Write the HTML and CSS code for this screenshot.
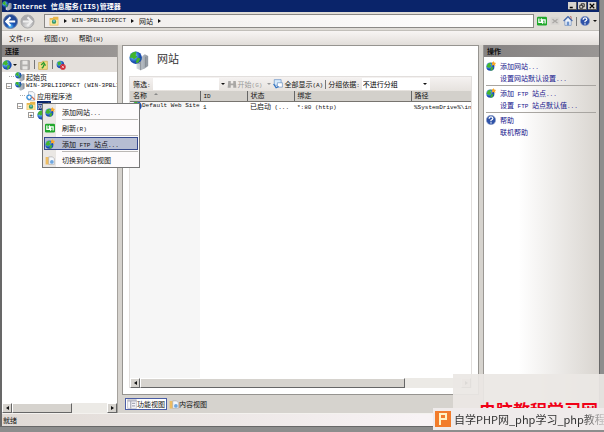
FILE: index.html
```
<!DOCTYPE html>
<html lang="zh-CN">
<head>
<meta charset="utf-8">
<title>Internet 信息服务(IIS)管理器</title>
<link rel="stylesheet" href="styles.css">
</head>
<body>
<svg class="defs" aria-hidden="true">
  <defs>
    <radialGradient id="sea" cx="35%" cy="35%"><stop offset="0" stop-color="#c4ecff"/><stop offset=".5" stop-color="#4a9be6"/><stop offset="1" stop-color="#1a4cae"/></radialGradient>
    <linearGradient id="steel"><stop offset="0" stop-color="#d8dde2"/><stop offset="1" stop-color="#8d959e"/></linearGradient>
    <radialGradient id="blueball" cx="50%" cy="85%"><stop offset="0" stop-color="#58c8ff"/><stop offset=".5" stop-color="#1b55b8"/><stop offset="1" stop-color="#234a96"/></radialGradient>
    <radialGradient id="grayball" cx="50%" cy="80%"><stop offset="0" stop-color="#e4e4e4"/><stop offset="1" stop-color="#a9a9ac"/></radialGradient>
    <symbol id="globe" viewBox="0 0 16 16"><circle cx="8" cy="8" r="7.5" fill="url(#sea)"/><path d="M2 4Q5 0 9 1L8 4 10 6 6 9 4 7 1 8zM9 8l4 1-2 5-3 1z" fill="#44b52d"/></symbol>
    <symbol id="site" viewBox="0 0 16 16"><circle cx="7" cy="9" r="6.5" fill="url(#sea)"/><path d="M2 6Q4 2 8 3L7 6 9 8 5 11 1 9zM8 10l4 0-2 5-3 0z" fill="#44b52d"/><path d="M12 0l1.200 2.500L16 3l-1.500 2 .5 3-3-1.500L9 7l1-3-1-2 2 0z" fill="#f9a928"/></symbol>
    <symbol id="server" viewBox="0 0 24 24"><path d="M9 8l5-2 5 2v13l-5 2-5-2zM16 6l3-2 4 2v12l-4 3-3-1z" fill="url(#steel)"/><path d="M14 8v15M10 11l3 1M10 14l3 1M20 7v12" stroke="#7d848c" fill="none"/><circle cx="8" cy="8" r="7.500" fill="url(#sea)"/><path d="M2 4Q5 0 9 1L8 5 10 7 6 10 4 8 1 8zM10 8l4 1-3 5-3 0z" fill="#41b52b"/></symbol>
    <symbol id="folder" viewBox="0 0 16 16"><path d="M1 3h5l1-2h8v14H1z" fill="#e9b64b"/><path d="M2 6h12v8H2z" fill="#ffe9a0"/><circle cx="8" cy="9" r="3.500" fill="#3c9b67"/><circle cx="8" cy="8" r="1.500" fill="#7bc4ee"/></symbol>
    <symbol id="refresh" viewBox="0 0 16 16"><rect y="1" width="16" height="14" rx="2" fill="#21a82c"/><path d="M3 4v6h4V5M13 12V6H9v5" stroke="#fff" stroke-width="2" fill="none"/><path d="M5 6l2-3 2 3zM7 10l2 3 2-3z" fill="#fff"/></symbol>
    <symbol id="help" viewBox="0 0 16 16"><circle cx="8" cy="8" r="7.500" fill="#2e52a8" stroke="#9aa9cc"/><path d="M5 6q0-3 3-3t3 2.500Q11 7 8 8.500V10M8 11.500v2" stroke="#fff" stroke-width="2" fill="none"/></symbol>
    <symbol id="pages" viewBox="0 0 16 16"><path d="M1 3h5l1 2h4v10H1z" fill="#eebd62"/><path d="M6 3h6l3 3v9H6z" fill="#f5f8fc" stroke="#a8a8ad"/><circle cx="11" cy="11" r="3" fill="#6ea6df"/></symbol>
    <symbol id="home" viewBox="0 0 16 16"><path d="M3 7v8h10V7L8 2z" fill="#eef4fb" stroke="#5d7eb5"/><path d="M1 8l7-7 7 7" stroke="#4066ab" stroke-width="2" fill="none"/><path d="M6 9h4v6H6z" fill="#6d93cc"/><path d="M11 1h2v4" stroke="#a44" fill="none"/></symbol>
    <symbol id="pool" viewBox="0 0 16 16"><path d="M4 1h7l3 3v11H4z" fill="#f6f8fb" stroke="#9aa3b0"/><circle cx="5" cy="10" r="4.500" fill="#3f91d6"/><path d="M2 9l4-2 2 3-3 3z" fill="#fff"/><path d="M9 9l5 5" stroke="#d56a4a" stroke-width="2"/></symbol>
    <symbol id="disk" viewBox="0 0 16 16"><path d="M1 1h14v14H1z" fill="#b4b2b0" stroke="#8e8c8a"/><path d="M4 1h8v6H4zM4 10h8v5H4z" fill="#e8e6e4"/></symbol>
    <symbol id="up" viewBox="0 0 16 16"><path d="M1 4h5l1-2h8v13H1z" fill="#f1dc86" stroke="#c6a445"/><path d="M6 13q4-2 3-6M5 8l4-4 3 5" stroke="#2d9b30" stroke-width="2" fill="none"/></symbol>
    <symbol id="unlink" viewBox="0 0 16 16"><circle cx="7" cy="7" r="6" fill="url(#sea)"/><path d="M2 4l5-2 1 4-4 3z" fill="#44b52d"/><circle cx="11" cy="11" r="4.500" fill="#d22a35"/><path d="M9 9l4 4m0-4l-4 4" stroke="#fff"/></symbol>
    <symbol id="find" viewBox="0 0 16 16"><path d="M2 3h4v4h4V3h4l1 11h-5v-4H6v4H1z" fill="#a9a7a5"/></symbol>
    <symbol id="showall" viewBox="0 0 16 16"><path d="M2 1h11v9H2z" fill="#d7ebfc" stroke="#5d87bd"/><path d="M7 6h8v7H7z" fill="#fff" stroke="#5d87bd"/><path d="M1 8l4 6 4-2" stroke="#2d72c4" stroke-width="2" fill="none"/></symbol>
    <symbol id="features" viewBox="0 0 16 16"><path d="M1 1h14v14H1z" fill="#f7f7fa" stroke="#a9aab8"/><path d="M1 3h14M6 3v12M8 7h5M8 11h5" stroke="#a9aab8" stroke-width="2"/></symbol>
    <symbol id="stop" viewBox="0 0 16 16"><path d="M1 2h14v12H1z" fill="#d6d4d0"/><path d="M4 5l8 6m0-6l-8 6" stroke="#aaa8a5" stroke-width="2"/></symbol>
  </defs>
</svg>

<div class="window">
  <header class="title">
    <svg class="ico"><use href="#server"/></svg>
    <h1><span class="en">Internet </span>信息服务<span class="en">(IIS)</span>管理器</h1>
    <div class="caption">
      <button aria-label="最小化"><svg viewBox="0 0 8 8"><path d="M1 6h4" stroke="#000" stroke-width="2"/></svg></button>
      <button aria-label="还原"><svg viewBox="0 0 8 8"><path d="M3 3V1h4v4H5M1 3h4v4H1z" stroke="#000" fill="none"/></svg></button>
      <button aria-label="关闭"><svg viewBox="0 0 8 8"><path d="M1 1l6 6m0-6L1 7" stroke="#000" stroke-width="1.500"/></svg></button>
    </div>
  </header>

  <nav class="navbar">
    <button class="round" aria-label="后退"><svg viewBox="0 0 16 16"><circle cx="8" cy="8" r="7.500" fill="url(#blueball)" stroke="#7083aa"/><path d="M13 8H4M8 3.500L3.500 8 8 12.500" stroke="#fff" stroke-width="2.200" fill="none"/></svg></button>
    <button class="round" aria-label="前进"><svg viewBox="0 0 16 16"><circle cx="8" cy="8" r="7" fill="url(#grayball)" stroke="#aaa"/><path d="M3 8h9M8 3.500L12.500 8 8 12.500" stroke="#eee" stroke-width="2.200" fill="none"/></svg></button>
    <div class="address">
      <svg class="ico"><use href="#folder"/></svg><i class="tri"></i>
      <a href="#server-node" class="en">WIN-3PBLIIOPECT</a><i class="tri"></i>
      <a href="#sites">网站</a><i class="tri"></i>
    </div>
    <div class="navtools">
      <button aria-label="刷新"><svg class="ico"><use href="#refresh"/></svg></button>
      <button aria-label="停止"><svg class="ico"><use href="#stop"/></svg></button>
      <button aria-label="主页"><svg class="ico"><use href="#home"/></svg></button>
      <i class="bar"></i>
      <button aria-label="帮助"><svg class="ico"><use href="#help"/></svg></button>
      <i class="drop"></i>
    </div>
  </nav>

  <div class="menubar">
    <button>文件<span class="en">(F)</span></button>
    <button>视图<span class="en">(V)</span></button>
    <button>帮助<span class="en">(H)</span></button>
  </div>

  <div class="work">
    <aside class="connections">
      <h2>连接</h2>
      <div class="tools">
        <button aria-label="连接"><svg class="ico"><use href="#globe"/></svg></button><i class="drop"></i>
        <button aria-label="保存"><svg class="ico"><use href="#disk"/></svg></button><i class="bar"></i>
        <button aria-label="向上"><svg class="ico"><use href="#up"/></svg></button><i class="bar"></i>
        <button aria-label="断开"><svg class="ico"><use href="#unlink"/></svg></button>
      </div>
      <div class="treebox">
        <ul class="tree">
          <li class="l1"><i class="line"></i><svg class="ico"><use href="#server"/></svg>起始页</li>
          <li class="l1" id="server-node"><i class="box">−</i><svg class="ico"><use href="#server"/></svg><span class="en">WIN-3PBLIIOPECT (WIN-3PBLIIOPECT)</span></li>
          <li class="l2"><i class="line"></i><svg class="ico"><use href="#pool"/></svg>应用程序池</li>
          <li class="l2"><i class="box">−</i><svg class="ico"><use href="#folder"/></svg><span class="picked">网站</span></li>
          <li class="l3"><i class="box">+</i><svg class="ico"><use href="#globe"/></svg></li>
        </ul>
        <div class="context" role="menu">
          <button role="menuitem"><svg class="ico"><use href="#site"/></svg><span>添加网站<span class="en">...</span></span></button>
          <hr>
          <button role="menuitem"><svg class="ico"><use href="#refresh"/></svg><span>刷新<span class="en">(R)</span></span></button>
          <hr>
          <button role="menuitem" class="hot"><svg class="ico"><use href="#site"/></svg><span>添加<span class="en"> FTP </span>站点<span class="en">...</span></span></button>
          <hr>
          <button role="menuitem"><svg class="ico"><use href="#pages"/></svg><span>切换到内容视图</span></button>
        </div>
      </div>
      <div class="scroll"><button class="left" aria-label="向左"></button><div class="thumb"></div><div class="rest"></div><button class="right" aria-label="向右"></button></div>
    </aside>

    <main class="center">
      <section class="page">
        <div class="heading" id="sites"><svg><use href="#server"/></svg><h2>网站</h2></div>
        <div class="listing">
          <div class="filter">
            <label for="filter">筛选<span class="en">:</span></label>
            <input id="filter" type="text"><i class="drop"></i>
            <button class="off"><svg class="ico"><use href="#find"/></svg>开始<span class="en">(G)</span></button><i class="drop dim"></i>
            <button><svg class="ico"><use href="#showall"/></svg>全部显示<span class="en">(A)</span></button><i class="bar"></i>
            <label for="group">分组依据<span class="en">:</span></label>
            <div class="pick"><select id="group"><option>不进行分组</option></select><i class="drop"></i></div>
          </div>
          <table>
            <colgroup><col class="c1"><col class="c2"><col class="c3"><col class="c4"><col></colgroup>
            <thead><tr><th>名称<i class="sort"></i></th><th><span class="en">ID</span></th><th>状态</th><th>绑定</th><th>路径</th></tr></thead>
            <tbody>
              <tr><td><div class="name"><svg class="ico"><use href="#globe"/></svg><span class="en">Default Web Site</span></div></td><td><span class="en">1</span></td><td>已启动<span class="en"> (...</span></td><td><span class="en">*:80 (http)</span></td><td><span class="en">%SystemDrive%\in</span></td></tr>
            </tbody>
          </table>
          <div class="space"></div>
          <div class="scroll wide"><button class="left" aria-label="向左"></button><div class="thumb"></div><div class="rest"></div><button class="right" aria-label="向右"></button></div>
        </div>
      </section>
      <div class="tabs">
        <button class="on"><svg class="ico"><use href="#features"/></svg>功能视图</button>
        <button><svg class="ico"><use href="#pages"/></svg>内容视图</button>
      </div>
    </main>

    <aside class="actions">
      <h2>操作</h2>
      <ul>
        <li><svg class="ico"><use href="#site"/></svg><a href="#add">添加网站<span class="en">...</span></a></li>
        <li><a href="#defaults">设置网站默认设置<span class="en">...</span></a></li>
      </ul>
      <ul>
        <li><svg class="ico"><use href="#site"/></svg><a href="#ftp">添加<span class="en"> FTP </span>站点<span class="en">...</span></a></li>
        <li><a href="#ftpdefaults">设置<span class="en"> FTP </span>站点默认值<span class="en">...</span></a></li>
      </ul>
      <ul>
        <li><svg class="ico"><use href="#help"/></svg><a href="#help-topic">帮助</a></li>
        <li><a href="#online">联机帮助</a></li>
      </ul>
    </aside>
  </div>
  <footer class="status">就绪</footer>
</div>

<div class="mark">
  <div class="haze"><span>电脑教程学习网</span></div>
  <div class="brand">
    <svg viewBox="0 0 16 16"><path d="M0 0h16v16H0z" fill="#f27c2b"/><path d="M5 14V3h6v5H6" stroke="#fff3c4" stroke-width="2" fill="none"/></svg>
    <span>自学PHP网_php学习_php教程</span>
  </div>
</div>
</body>
</html>
```
FILE: styles.css
```
* { box-sizing: border-box; }
body {
  margin: 0;
  height: 100vh;
  padding: 0 4px 5px 0;
  position: relative;
  overflow: hidden;
  background: #8d8d8d;
  color: #111;
  font: 7px/10px "Noto Sans CJK SC", sans-serif;
}
.defs { position: absolute; width: 0; height: 0; }
.en { font-family: "Liberation Mono", monospace; font-size: 6px; line-height: 1; white-space: pre; }
h1, h2, ul { margin: 0; padding: 0; font-size: inherit; list-style: none; }
button {
  display: flex;
  align-items: baseline;
  padding: 0;
  border: 0;
  background: none;
  color: inherit;
  font: inherit;
  white-space: nowrap;
}
button .ico { align-self: center; margin-right: 1px; }
a { color: inherit; text-decoration: none; }
.ico { width: 10px; height: 10px; flex: none; display: block; }
.tri { border: 2px solid transparent; border-left: 3px solid #111; border-right: 0; }
.drop { flex: none; border: 2px solid transparent; border-top-color: #111; border-bottom: 0; }
.dim { border-top-color: #999; }
.bar { width: 1px; height: 9px; background: #777; flex: none; }

.window {
  height: 100%;
  display: flex;
  flex-direction: column;
  background: #d6d3ce;
  border: solid #686868;
  border-width: 0 1px 1px 2px;
}
.title {
  height: 12px;
  flex: none;
  display: flex;
  align-items: center;
  background: #0a246a;
  color: #fff;
}
.title h1 { flex: 1; padding-left: 1px; font-weight: 700; }
.title .en { font-size: 7px; }
.caption { display: flex; padding-right: 1px; }
.caption button {
  width: 9px;
  height: 8px;
  margin-right: 1px;
  align-items: center;
  justify-content: center;
  background: #d6d3ce;
  border: solid #555;
  border-width: 0 1px 1px 0;
}
.caption svg { width: 6px; height: 6px; }

.navbar {
  height: 19px;
  flex: none;
  display: flex;
  align-items: center;
  gap: 2px;
  padding: 0 2px 0 1px;
  background: #dfdcd7;
  border-bottom: 1px solid #c2bfba;
}
.round svg { width: 15px; height: 15px; }
.address {
  flex: 1;
  height: 14px;
  margin-left: 7px;
  padding-left: 4px;
  display: flex;
  align-items: center;
  gap: 5px;
  background: linear-gradient(90deg, #efecea, #fff);
  border: 1px solid #8b8986;
}
.navtools { display: flex; align-items: center; gap: 3px; padding-left: 1px; }
.navtools .ico { margin: 0; }
.menubar {
  height: 14px;
  flex: none;
  display: flex;
  align-items: center;
  gap: 10px;
  padding-left: 7px;
  background: linear-gradient(#f8f5f4, #e2deda);
}

.work {
  flex: 1;
  min-height: 0;
  display: grid;
  grid-template-columns: 116px 1fr 116px;
  gap: 4px;
}
.connections, .actions { display: flex; flex-direction: column; min-width: 0; min-height: 0; }
.connections > h2, .actions > h2 {
  height: 12px;
  flex: none;
  padding-left: 3px;
  line-height: 12px;
  background: linear-gradient(90deg, #858282, #999694);
  font-weight: 700;
}
.connections { border-right: 1px solid #a5a29d; background: #fff; }
.tools {
  height: 15px;
  flex: none;
  display: flex;
  align-items: center;
  gap: 3px;
  background: #e4e0dc;
}
.tools .drop { margin-left: -3px; }
.treebox { flex: 1; position: relative; min-height: 0; }
.tree { height: 48px; display: grid; grid-auto-rows: 1fr; overflow: hidden; }
.tree li { min-height: 0; display: flex; align-items: center; gap: 1px; white-space: nowrap; overflow: hidden; }
.l1 { padding-left: 4px; }
.l2 { padding-left: 15px; }
.l3 { padding-left: 26px; }
.box {
  width: 6px;
  height: 6px;
  margin-right: 2px;
  flex: none;
  border: 1px solid #999;
  font: normal 6px/4px "Liberation Sans", sans-serif;
  text-align: center;
}
.line { width: 5px; margin: 0 0 0 3px; flex: none; border-top: 1px dotted #aaa; }
.picked { background: #0a246a; color: #fff; }
.context {
  position: absolute;
  left: 40px;
  top: 31px;
  z-index: 2;
  width: 98px;
  padding: 1px;
  background: linear-gradient(90deg, #eae7e4 13px, #fdfbfc 13px);
  border: 1px solid #777;
}
.context button { width: 100%; height: 13px; align-items: center; padding-left: 1px; text-align: left; }
.context .ico { margin-right: 7px; }
.context hr { margin: 1px 0 1px 18px; border: 0; border-top: 1px solid #bbb8b5; }
.context .hot { background: #b6bdd2; outline: 1px solid #34488d; outline-offset: -1px; }

.scroll { height: 10px; flex: none; display: flex; background: #eceae6; }
.scroll button, .thumb {
  background: #d6d3ce;
  border: 1px solid #fff;
  border-right-color: #666;
  border-bottom-color: #666;
}
.scroll button { width: 10px; flex: none; align-items: center; justify-content: center; }
.left::before { content: ""; border: 2px solid transparent; border-right: 3px solid #111; border-left: 0; }
.right::before { content: ""; border: 2px solid transparent; border-left: 3px solid #111; border-right: 0; }
.thumb { flex: 60; }
.rest { flex: 36; }
.wide .thumb { flex: 268; }
.wide .rest { flex: 57; }

.center { display: flex; flex-direction: column; min-width: 0; }
.page {
  flex: 1;
  min-height: 0;
  display: flex;
  flex-direction: column;
  padding: 5px 6px 6px;
  background: #fff;
  border: 1px solid #969490;
}
.heading { height: 25px; flex: none; display: flex; gap: 8px; }
.heading svg { width: 20px; height: 20px; }
.heading h2 { font-size: 11px; line-height: 14px; font-weight: 400; color: #333; }
.listing {
  flex: 1;
  min-height: 0;
  display: flex;
  flex-direction: column;
  border: 1px solid #e2dfdd;
  border-bottom: 0;
}
.filter {
  height: 14px;
  flex: none;
  display: flex;
  align-items: center;
  gap: 2px;
  padding-left: 3px;
  background: linear-gradient(#f5f2f1, #e6e2de);
  white-space: nowrap;
}
.filter input { width: 66px; height: 12px; border: 0; padding: 0 2px; background: #fff; font: inherit; }
.filter .off { color: #999; }
.filter .off + .drop { margin-left: 3px; }
.pick { width: 68px; height: 12px; display: flex; align-items: center; background: #fff; padding-right: 3px; }
.pick select { flex: 1; appearance: none; border: 0; padding: 0 1px; background: none; font: inherit; }
table { width: 100%; table-layout: fixed; border-collapse: collapse; line-height: 9px; }
.c1 { width: 70px; }
.c2, .c3 { width: 47px; }
.c4 { width: 117px; }
th {
  height: 10px;
  padding: 0 0 0 3px;
  background: #d3d0cb;
  border-right: 1px solid #666;
  border-bottom: 1px solid #77746f;
  font-weight: 400;
  text-align: left;
}
th:last-child { border-right: 0; }
td { height: 9px; padding: 0 0 0 3px; white-space: nowrap; overflow: hidden; }
td:first-child { background: #f6f6f6; }
.name { height: 9px; display: flex; align-items: center; margin-left: -1px; }
.sort { display: inline-block; margin: 0 0 3px 7px; border: 2px solid transparent; border-top: 0; border-bottom-color: #888; }
.space { flex: 1; background: linear-gradient(90deg, #f6f6f6 70px, #fff 70px); }
.tabs { height: 18px; flex: none; display: flex; align-items: center; padding-left: 3px; gap: 1px; }
.tabs button { height: 12px; padding: 0 1px; align-items: center; }
.tabs .ico { margin: 0; }
.tabs .on { border: 1px solid #4a5da5; background: #fff; }

.actions {
  border-left: 1px solid #9a9793;
  background: linear-gradient(90deg, #fff 30%, #d9d5d0);
  color: #16168c;
}
.actions > h2 { margin-bottom: 2px; color: #111; }
.actions ul { margin: 0 3px 0 2px; padding: 1px 0; border-bottom: 1px solid #a8a5a1; }
.actions ul:last-child { border: 0; }
.actions li { height: 12px; display: flex; align-items: center; gap: 4px; white-space: nowrap; }
.actions li > a:first-child { padding-left: 14px; }
.status {
  height: 13px;
  flex: none;
  padding-left: 1px;
  line-height: 13px;
  background: linear-gradient(90deg, #e0dad5, #f8f3f5 70%);
  border-top: 1px solid #f4f2ef;
}

.mark { position: absolute; right: 0; bottom: 2px; width: 171px; }
.haze {
  height: 34px;
  margin-left: 20px;
  overflow: hidden;
  background: #ebe7e4ee;
  color: #f00016;
  font-size: 17px;
  font-weight: 700;
  line-height: 22px;
  white-space: nowrap;
}
.haze span { display: block; padding: 25px 0 0 26px; }
.brand {
  height: 22px;
  display: flex;
  align-items: center;
  gap: 3px;
  padding-left: 2px;
  background: #efebeb;
  color: #333;
  font-size: 11px;
  line-height: 20px;
  white-space: nowrap;
  overflow: hidden;
}
.brand svg { width: 16px; height: 16px; flex: none; }
.brand span { overflow: hidden; mask-image: linear-gradient(90deg, #000 84%, #0003); }
```
